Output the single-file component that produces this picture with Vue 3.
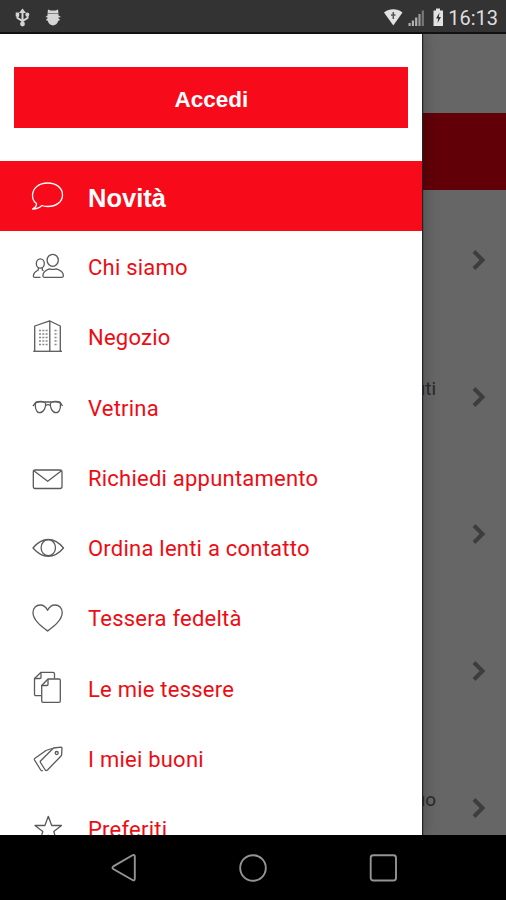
<template>
  <div class="screen">
    <header class="status">
      <svg class="status-left" width="50" height="34" viewBox="0 0 50 34">
        <g fill="none" stroke="#d4d4d4" stroke-width="2">
          <path d="M7.500 12v12M2.500 14.500v3.500l5 3l5-3v-3.500" />
        </g>
        <g fill="#d4d4d4">
          <path d="M7.500 8.500l3.500 4.500h-7z" />
          <circle cx="7.500" cy="24" r="2.400" />
          <rect x="0.700" y="12.500" width="3.500" height="4" />
          <circle cx="12.300" cy="14.500" r="2" />
          <path d="M33 9.500l2.500 1h5l2.500-1l.5 4h-11zM30.500 17l2-1.500v-1.500h11v1.500l2.500 1.500l-2.500.5v1l1.800 1.500l-2 .8c-.8 2.800-3 4.700-5.300 4.700s-4.500-1.900-5.300-4.700l-2-.8l1.800-1.500v-1z" />
        </g>
      </svg>
      <div class="status-right">
        <svg width="62" height="34" viewBox="0 0 62 34">
          <path fill="#e2e2e2" d="M1 12.500c5.500-4.200 13-4.200 18.500 0L10.300 25.500z" />
          <path fill="none" stroke="#555" stroke-width="1.500" d="M10.300 12v7M8 15h4.500" />
          <g fill="#b0b0b0">
            <rect x="25.500" y="23" width="2.200" height="3" />
            <rect x="28.800" y="20.500" width="2.200" height="5.500" />
            <rect x="32.100" y="17.500" width="2.200" height="8.500" />
            <rect x="35.400" y="14" width="2.200" height="12" fill="#999" />
            <rect x="38.700" y="10.500" width="2.200" height="15.500" fill="#777" />
          </g>
          <path fill="#e2e2e2" d="M50.500 10.500h2.500v-2h4v2h3v15.500h-9.500v-15.500z" />
          <path fill="#333" d="M56.500 12.500l-3.500 6h2.200l-.7 4.500l3.500-6h-2.200z" />
        </svg>
        <span class="clock">16:13</span>
      </div>
    </header>

    <main class="content">
      <div class="page">
        <div class="page-header"></div>
        <div class="page-banner"></div>
        <div v-for="(row, index) in rows" :key="index" class="page-row">
          <span class="page-text">{{ row }}</span>
          <svg class="chevron" width="16" height="22" viewBox="0 0 16 22">
            <path d="M3 2.500L11.500 11L3 19.500" />
          </svg>
        </div>
      </div>

      <nav class="drawer">
        <button class="btn-accedi">Accedi</button>
        <ul class="menu">
          <li
            v-for="(item, index) in menu"
            :key="item.label"
            class="menu-item"
            :class="{ attivo: index === attivo }"
            @click="attivo = index"
          >
            <svg class="icon" width="36" height="36" viewBox="0 0 36 36">
              <path v-for="(d, i) in item.paths" :key="i" :d="d" />
              <path v-if="item.dots" class="dots" :d="item.dots" />
            </svg>
            <span class="label">{{ item.label }}</span>
          </li>
        </ul>
      </nav>
    </main>

    <footer class="navbar">
      <svg width="28" height="32" viewBox="0 0 28 32">
        <path d="M23.500 3.300Q25.800 2 25.800 4.800V26.500Q25.800 29.300 23.500 28L4.300 17Q2.600 15.700 4.300 14.400Z" />
      </svg>
      <svg width="28" height="32" viewBox="0 0 28 32">
        <circle cx="14" cy="16" r="12.800" />
      </svg>
      <svg width="28" height="32" viewBox="0 0 28 32">
        <rect x="1.700" y="3.200" width="25.300" height="25.300" rx="2.500" />
      </svg>
    </footer>
  </div>
</template>

<script setup>
import { ref } from 'vue'

const attivo = ref(0)

const rows = ['', 'uti', '', '', 'uo']

const menu = [
  {
    label: 'Novità',
    paths: [
      'M2.500 31C5.500 29.500 6.700 28 6.500 25.500C3.500 23.500 2.500 20.500 2.500 17.500C2.500 10 9 5 17.700 5S32.500 10 32.500 17S26 28.500 17.700 28.500C15.500 28.500 13.500 28.200 12 27.500C9.500 30 6 31 2.500 31Z'
    ]
  },
  {
    label: 'Chi siamo',
    paths: [
      'M22.700 6.300a5.600 6 0 0 1 0 12a5.600 6 0 0 1 0-12Z',
      'M14.500 29.300Q12.700 29.300 12.900 27.500C13.300 22.500 17 22 19.500 20.800Q22.700 22 26.200 20.800C29 22 33 22.500 33.400 27.500Q33.500 29.300 31.500 29.300Z',
      'M10.300 10.800a4 4.700 0 0 1 0 9.400a4 4.700 0 0 1 0-9.400Z',
      'M10.500 29.300H4.800Q3.200 29.300 3.400 27.500C3.700 24 6 23.300 8.300 22V19.800M12.300 19.800V22L13.500 22.700'
    ]
  },
  {
    label: 'Negozio',
    paths: [
      'M3.200 32.300H32',
      'M4.700 32V7L19.800 1.900V32',
      'M19.800 2L30.300 7V32'
    ],
    dots: 'M9 11.500H18M9 15H18M9 18.500H18M9 22H18M9 25.500H18M24.500 11.500H28M24.500 15H28M24.500 18.500H28M24.500 22H28M24.500 25.500H28'
  },
  {
    label: 'Vetrina',
    paths: [
      'M3 17L6 13.200Q10 11.500 15 13H21Q26 11.500 30 13.200L32.500 17',
      'M5.300 15.500C5.300 12 15 12.500 15.500 14.500C16.500 18 13.500 23.700 9.700 23.700C6.500 23.700 5.300 19 5.300 15.500Z',
      'M30.500 15.500C30.500 12 21 12.500 20.500 14.500C19.500 18 22.300 23.700 26 23.700C29.300 23.700 30.500 19 30.500 15.500Z',
      'M15.500 16.500Q18 14.800 20.500 16.500'
    ]
  },
  {
    label: 'Richiedi appuntamento',
    paths: [
      'M5 11H30Q32 11 32 13V27.500Q32 29.500 30 29.500H5Q3.300 29.500 3.300 27.500V13Q3.300 11 5 11Z',
      'M3.800 11.800L17.700 22.300L31.500 11.800'
    ]
  },
  {
    label: 'Ordina lenti a contatto',
    paths: [
      'M3 18Q10 9.500 18.300 9.500T33.500 18Q26.500 26.300 18.300 26.300T3 18Z',
      'M18.300 9.700a7.200 8 0 0 1 0 16a7.200 8 0 0 1 0-16Z'
    ]
  },
  {
    label: 'Tessera fedeltà',
    paths: [
      'M17.600 31C11 26 3 20 3 12.500C3 8 6.300 5 10.200 5C13.500 5 16 7 17.600 10.300C19.200 7 21.700 5 25 5C29 5 32.200 8 32.200 12.500C32.200 20 24.200 26 17.600 31Z'
    ]
  },
  {
    label: 'Le mie tessere',
    paths: [
      'M11 25.700H6Q4.500 25.700 4.500 24.200V8.500L11 2.300H23Q24.500 2.300 24.500 3.800V8.500',
      'M4.500 8.500H10Q11 8.500 11 7.500V2.300',
      'M18 9H29Q30.300 9 30.300 10.300V31Q30.300 32.300 29 32.300H13Q11.700 32.300 11.700 31V15.500Z',
      'M11.700 15.500H17Q18 15.500 18 14.500V9'
    ]
  },
  {
    label: 'I miei buoni',
    paths: [
      'M10.500 20L23.500 7L31 6.200Q32 6.200 32 7.200L31.500 14.500L17.500 29Q16.300 30 15.200 29L10.500 21.500Q10 20.700 10.500 20Z',
      'M13 29.500Q11.500 30.300 10.700 29L4.500 19Q4 18 5 17.300L16 9.500L22 7.500',
      'M26.700 10.500a1.500 1.500 0 0 1 0 3a1.500 1.500 0 0 1 0-3Z'
    ]
  },
  {
    label: 'Preferiti',
    paths: [
      'M18.300 5.300L21.700 14.500H31.500L23.800 20.500L26.500 30L18.300 24.300L10 30L12.800 20.500L5 14.500H14.900Z'
    ]
  }
]
</script>

<style>
body {
  margin: 0;
  background: #000;
}
</style>

<style scoped>
.screen {
  display: flex;
  flex-direction: column;
  width: 506px;
  height: 900px;
  overflow: hidden;
  font-family: Roboto, "Liberation Sans", sans-serif;
}

.status {
  display: flex;
  justify-content: space-between;
  height: 34px;
  box-sizing: border-box;
  padding: 0 8px 0 14.500px;
  background: #333;
  border-bottom: 2px solid #111;
  flex-shrink: 0;
}

.status-right {
  display: flex;
}

.clock {
  width: 51px;
  margin-left: 2px;
  color: #dedede;
  font-size: 20px;
  line-height: 37px;
  text-align: right;
  white-space: nowrap;
}

.content {
  position: relative;
  height: 801px;
  overflow: hidden;
  flex-shrink: 0;
}

.page {
  background: #666;
}

.page-header {
  height: 79px;
}

.page-banner {
  height: 77px;
  background: #620008;
}

.page-row {
  display: flex;
  align-items: center;
  justify-content: flex-end;
  height: 137.100px;
  padding-top: 3px;
  box-sizing: border-box;
  padding-right: 19px;
}

.page-text {
  margin: -17px 35px 0 0;
  color: #2a2a2a;
  font-size: 19px;
}

.chevron {
  fill: none;
  stroke: #3d3d3d;
  stroke-width: 4;
}

.drawer {
  position: absolute;
  top: 0;
  left: 0;
  width: 422px;
  height: 801px;
  box-sizing: border-box;
  padding-top: 33px;
  background: #fff;
  box-shadow: 1px 0 1px #222, 2px 0 14px rgba(0, 0, 0, 0.25);
  overflow: hidden;
}

.btn-accedi {
  display: block;
  width: 394px;
  height: 61px;
  margin: 0 0 33px 14.400px;
  padding: 5px 0 0;
  border: none;
  background: #f70a1a;
  color: #fff;
  font-family: "Liberation Sans", sans-serif;
  font-size: 22.500px;
  font-weight: 700;
  letter-spacing: 0;
}

.menu {
  margin: 0;
  padding: 0;
  list-style: none;
}

.menu-item {
  display: flex;
  align-items: center;
  height: 70.300px;
  padding-left: 30px;
  color: #ee0c14;
  font-size: 22px;
  letter-spacing: 0.23px;
}

.icon {
  margin-right: 22px;
  fill: none;
  stroke: #5a5a5a;
  stroke-width: 1.300;
  stroke-linejoin: round;
}

.dots {
  stroke: #888;
  stroke-width: 1.600;
  stroke-dasharray: 2 1.300;
}

.label {
  padding-top: 2px;
}

.attivo {
  background: #f70a1a;
  color: #fff;
  font-family: "Liberation Sans", sans-serif;
  font-size: 25.500px;
  font-weight: 700;
  letter-spacing: 0;
}

.attivo .icon {
  stroke: #fff;
}

.attivo .label {
  padding-top: 5px;
}

.navbar {
  display: flex;
  align-items: center;
  justify-content: center;
  gap: 102px;
  flex: 1;
  background: #000;
}

.navbar svg {
  fill: none;
  stroke: #949494;
  stroke-width: 1.900;
}
</style>
